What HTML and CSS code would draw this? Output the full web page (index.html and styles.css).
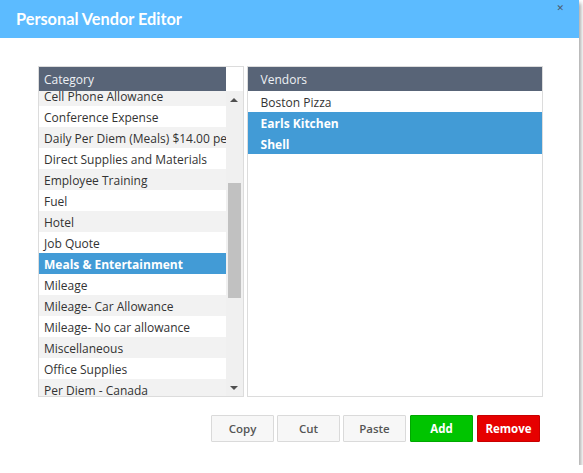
FILE: index.html
```html
<!DOCTYPE html>
<html>
<head>
<meta charset="utf-8">
<link rel="stylesheet" href="styles.css">
</head>
<body>
<div class="dialog">
  <div class="titlebar">
    <span class="title">Personal Vendor Editor</span>
    <span class="close">&#x2715;</span>
  </div>
  <div class="content">
    <div class="panels">
      <div class="panel cat-panel">
        <div class="cat-main">
          <div class="phead">Category</div>
          <div class="scroller">
            <ul class="list scrolled">
              <li class="alt">Cell Phone Allowance</li>
              <li>Conference Expense</li>
              <li class="alt">Daily Per Diem (Meals) $14.00 per day</li>
              <li>Direct Supplies and Materials</li>
              <li class="alt">Employee Training</li>
              <li>Fuel</li>
              <li class="alt">Hotel</li>
              <li>Job Quote</li>
              <li class="sel">Meals &amp; Entertainment</li>
              <li>Mileage</li>
              <li class="alt">Mileage- Car Allowance</li>
              <li>Mileage- No car allowance</li>
              <li class="alt">Miscellaneous</li>
              <li>Office Supplies</li>
              <li class="alt">Per Diem - Canada</li>
            </ul>
          </div>
        </div>
        <div class="sbar-col">
          <div class="sbar-gap"></div>
          <div class="sbar">
            <div class="sbtn"><span class="arrow up"></span></div>
            <div class="track">
              <div class="thumb"></div>
            </div>
            <div class="sbtn"><span class="arrow down"></span></div>
          </div>
        </div>
      </div>
      <div class="panel vendor-panel">
        <div class="phead vhead">Vendors</div>
        <ul class="list vlist">
          <li>Boston Pizza</li>
          <li class="sel">Earls Kitchen</li>
          <li class="sel">Shell</li>
        </ul>
      </div>
    </div>
    <div class="buttons">
      <button class="btn">Copy</button>
      <button class="btn">Cut</button>
      <button class="btn">Paste</button>
      <button class="btn add">Add</button>
      <button class="btn remove">Remove</button>
    </div>
  </div>
</div>
</body>
</html>
```
FILE: styles.css
```css
html, body {
  margin: 0;
  padding: 0;
  background: #ffffff;
}
body {
  font-family: "Open Sans", "DejaVu Sans", sans-serif;
  color: #333;
}
.dialog {
  position: relative;
  width: 579px;
  height: 465px;
  background: #fff;
  box-shadow: 2px 3px 4px rgba(0, 0, 0, 0.35);
}
.titlebar {
  height: 38px;
  background: #5cbbff;
  display: flex;
  align-items: center;
  padding-left: 16px;
}
.title {
  color: #fff;
  font-family: "Lato", "Open Sans", sans-serif;
  font-weight: 700;
  font-size: 16.3px;
  margin-top: -1px;
}
.close {
  position: absolute;
  top: 3px;
  right: 15px;
  font-size: 9px;
  color: #4c5a6a;
  font-family: "DejaVu Sans", sans-serif;
}
.content {
  padding: 28px 36px 0 38px;
}
.panels {
  display: flex;
  gap: 3px;
  height: 331px;
}
.panel {
  border: 1px solid #dcdcdc;
  box-sizing: border-box;
  height: 331px;
  overflow: hidden;
}
.cat-panel {
  width: 206px;
  display: flex;
}
.cat-main {
  width: 187px;
  display: flex;
  flex-direction: column;
}
.phead {
  height: 24px;
  flex: none;
  background: #586477;
  color: #eef1f5;
  font-size: 12px;
  line-height: 25px;
  padding-left: 5px;
}
.vhead {
  padding-left: 13px;
}
.scroller {
  flex: 1;
  overflow: hidden;
}
.list {
  list-style: none;
  margin: 0;
  padding: 0;
}
.list.scrolled {
  margin-top: -6px;
}
.list li {
  height: 21px;
  line-height: 23px;
  font-size: 12px;
  padding-left: 5px;
  white-space: nowrap;
  overflow: hidden;
  background: #fff;
}
.list li.alt {
  background: #f2f2f2;
}
.list li.sel {
  background: #429bd6;
  color: #fff;
  font-weight: 700;
}
.vlist li {
  padding-left: 13px;
}
.sbar-col {
  width: 17px;
  display: flex;
  flex-direction: column;
}
.sbar-gap {
  height: 24px;
  background: #fff;
}
.sbar {
  flex: 1;
  background: #f0f0f0;
  display: flex;
  flex-direction: column;
}
.sbtn {
  height: 17px;
  display: flex;
  align-items: center;
  justify-content: center;
}
.arrow {
  width: 0;
  height: 0;
  border-left: 4px solid transparent;
  border-right: 4px solid transparent;
}
.arrow.up {
  border-bottom: 4px solid #505050;
}
.arrow.down {
  border-top: 4px solid #505050;
}
.track {
  flex: 1;
  padding-top: 75px;
}
.thumb {
  margin-left: 2px;
  width: 13px;
  height: 115px;
  background: #c1c1c1;
}
.vendor-panel {
  width: 297px;
}
.buttons {
  display: flex;
  justify-content: flex-end;
  gap: 3px;
  margin-top: 18px;
  padding-right: 3px;
}
.btn {
  width: 63px;
  height: 27px;
  font-family: "Open Sans", "DejaVu Sans", sans-serif;
  font-size: 11.5px;
  font-weight: 600;
  color: #555;
  background: #f7f7f7;
  border: 1px solid #dadada;
  border-radius: 1px;
  padding: 0;
}
.btn.add {
  background: #00c400;
  border-color: #00a800;
  color: #fff;
  font-weight: 700;
  margin-left: 1px;
}
.btn.remove {
  background: #e60000;
  border-color: #c80000;
  color: #fff;
  font-weight: 700;
  margin-left: 1px;
}
```
